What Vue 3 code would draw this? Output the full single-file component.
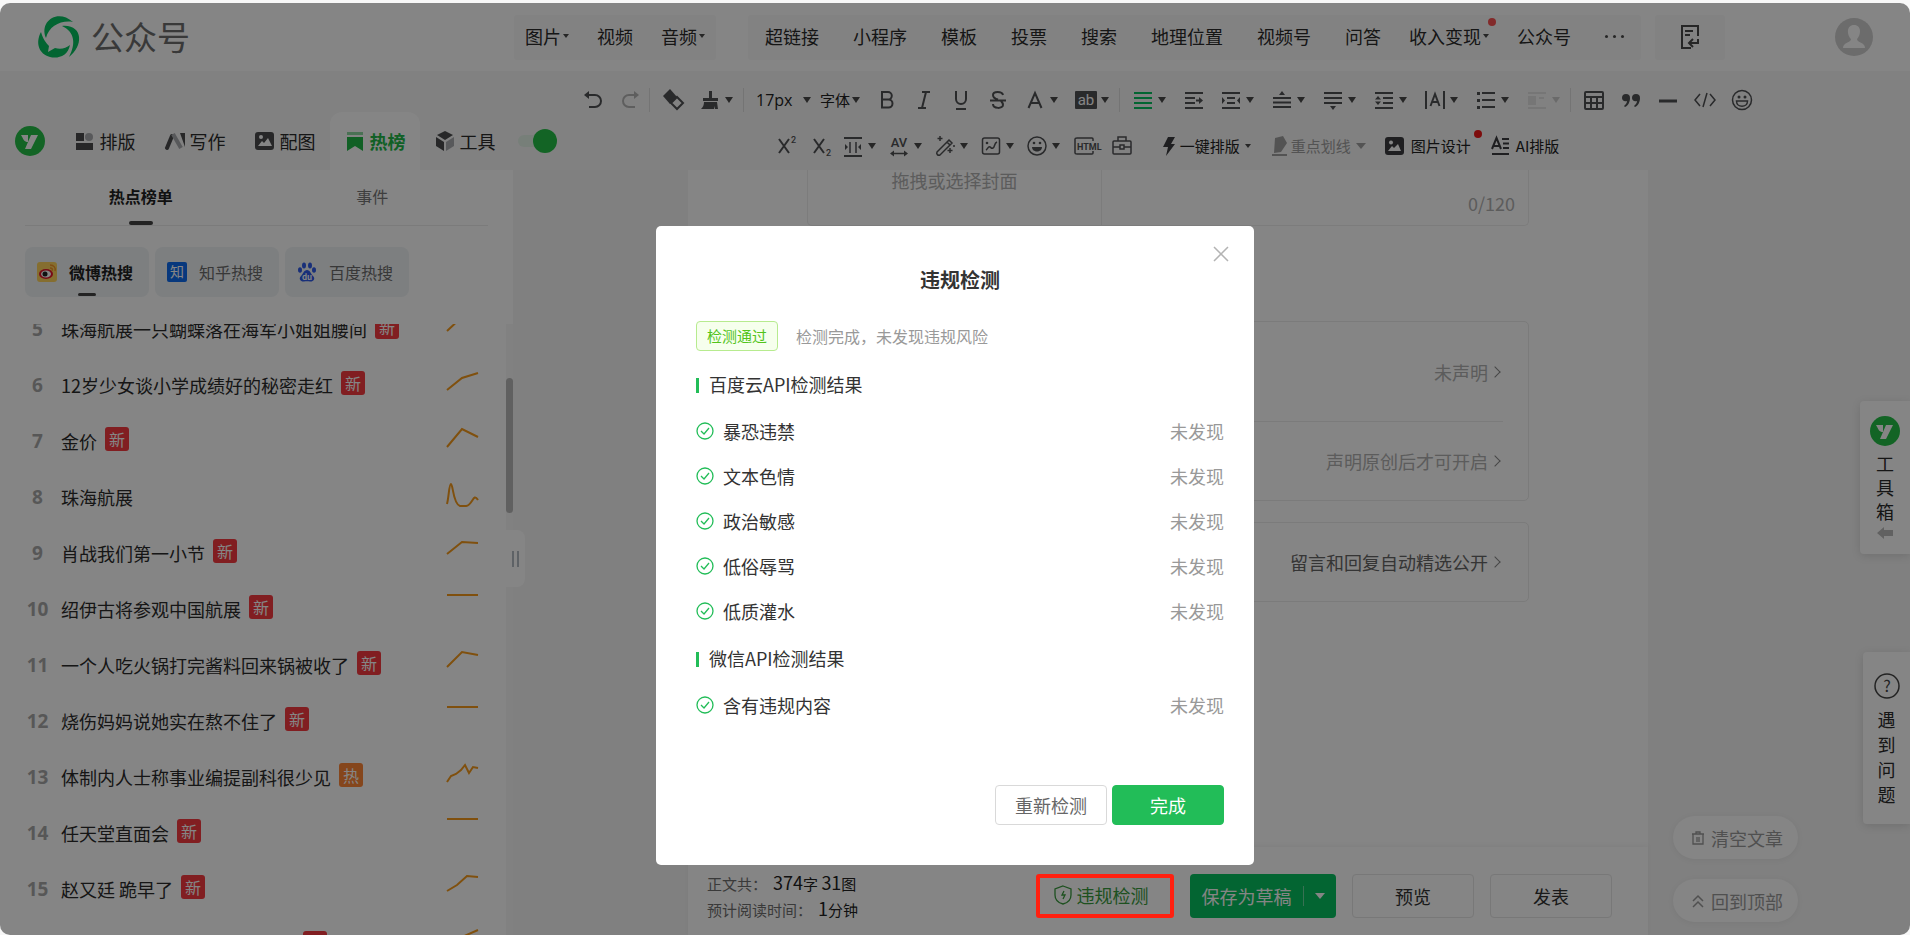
<script setup>
import { onMounted, ref } from 'vue'

const mediaMenu = [
  { label: '图片', caret: true },
  { label: '视频' },
  { label: '音频', caret: true }
]
const insertMenu = [
  { label: '超链接' },
  { label: '小程序' },
  { label: '模板' },
  { label: '投票' },
  { label: '搜索' },
  { label: '地理位置' },
  { label: '视频号' },
  { label: '问答' },
  { label: '收入变现', caret: true, dot: true },
  { label: '公众号' }
]

const line = 'fill="none" stroke="currentColor" stroke-width="2"'
const thin = 'fill="none" stroke="currentColor" stroke-width="1.5"'
const face = 'font-family="Roboto, sans-serif" fill="currentColor"'

const icons = {
  undo: `<path ${line} d="M3 5h9a5.5 5.5 0 0 1 0 12H6"/><path fill="currentColor" d="M1 5l5-4v8z"/>`,
  redo: `<path ${line} d="M17 5H9a5.5 5.5 0 0 0 0 12h6"/><path fill="currentColor" d="M19 5l-5-4v8z"/>`,
  eraser: `<path fill="currentColor" d="M0 6l7-7 7 8-7 7z"/><path ${line} d="M8 13l6-6 6 6-6 6z"/>`,
  brush: `<path fill="currentColor" d="M9 1h3v7h6v3H3V8h6zM4 12h13l1 7h-3l-1-3v3H1c2-2 3-4 3-7z"/>`,
  bold: `<path ${line} d="M5 2h6a3.8 3.8 0 0 1 0 7.600H5zM5 9.600h6.500a4 4 0 0 1 0 8H5z"/>`,
  italic: `<path ${line} d="M8 2h8M4 18h8M12 2L8 18"/>`,
  underline: `<path ${line} d="M5 1v8a5 5 0 0 0 10 0V1M5 19h10"/>`,
  strike: `<path ${line} d="M15 5c-1-4-10-4-10 0 0 3 3 4 5 4.500M2 10.500h16M5 14c0 5 10 5 10 1 0-2-1-3-2-4"/>`,
  color: `<path ${line} d="M3.500 18L10 3l6.500 15M6 13h8"/>`,
  ab: `<rect width="22" height="18" x="-1" y="1" rx="1" fill="currentColor"/><text x="10" y="15" text-anchor="middle" font-size="15" font-family="Roboto, sans-serif" fill="#fff">ab</text>`,
  justify: `<path fill="none" stroke="#07c160" stroke-width="2" d="M1 3h18M1 8h18M1 13h18M1 18h18"/>`,
  indent: `<path ${line} d="M1 3h18M1 8h10M1 13h10M1 18h18M12 10.500h4"/><path fill="currentColor" d="M15 7l4 3.500-4 3.500z"/>`,
  sides: `<path ${line} d="M1 3h18M6 8h8M6 13h8M1 18h18"/><path fill="currentColor" d="M1 7l3 3.500L1 14zM19 7l-3 3.500 3 3.500z"/>`,
  before: `<path ${line} d="M1 8h18M1 12.500h18M1 17h18"/><path fill="currentColor" d="M7 5l3-4 3 4z"/>`,
  after: `<path ${line} d="M1 3h18M1 8h18M1 13h18"/><path fill="currentColor" d="M7 16l3 4 3-4z"/>`,
  leading: `<path ${line} d="M1 3h18M9 8h10M9 13h10M1 18h18"/><path fill="currentColor" d="M1 9.500L4 6l3 3.500zM1 11.500L4 15l3-3.500z"/>`,
  spacing: `<path ${line} d="M1 1v18M19 1v18M5.500 16L10 4l4.500 12M7 12h6"/>`,
  list: `<path ${line} d="M6 3h13M6 10h13M6 17h13"/><path fill="currentColor" d="M1 2h3v3H1zM1 9h3v3H1zM1 16h3v3H1z"/>`,
  wrap: `<path ${line} d="M1 3h18M12 8h5M1 18h18"/><path fill="currentColor" d="M1 6h8v9H1z"/>`,
  table: `<rect x="1" y="2" width="18" height="17" rx="1" ${line}/><path ${line} d="M1 7h18M1 13h18M7 8v11M13 8v11"/>`,
  quote: `<path fill="currentColor" d="M5 4a4 4 0 0 1 4 4c0 4-2 8-5 9l-1-1c2-2 3-3 3-5-3 1-5-1-5-3a4 4 0 0 1 4-4zM15 4a4 4 0 0 1 4 4c0 4-2 8-5 9l-1-1c2-2 3-3 3-5-3 1-5-1-5-3a4 4 0 0 1 4-4z"/>`,
  rule: `<path fill="none" stroke="currentColor" stroke-width="3" d="M1 11h18"/>`,
  code: `<path ${thin} d="M5 4L0 10l5 6M15 4l5 6-5 6M12 3L8 17"/>`,
  smile: `<circle cx="10" cy="10" r="9.500" ${thin}/><circle cx="7" cy="7" r="1.500" fill="currentColor"/><circle cx="13" cy="7" r="1.500" fill="currentColor"/><path ${thin} d="M4.500 11h11c0 7-11 7-11 0z"/>`,
  sup: `<path ${line} d="M2 3l10 14M12 3L2 17"/><text x="14" y="7" font-size="9" font-weight="500" ${face}>2</text>`,
  sub: `<path ${line} d="M2 3l10 14M12 3L2 17"/><text x="14" y="20" font-size="9" font-weight="500" ${face}>2</text>`,
  margins: `<path ${line} d="M1 2h18M1 20h18"/><path ${thin} d="M7 6v11M13 6v11"/><path fill="currentColor" d="M2 8l3 3-3 3zM18 8l-3 3 3 3z"/>`,
  tracking: `<text x="10" y="11" text-anchor="middle" font-size="13" font-weight="500" ${face}>AV</text><path ${thin} d="M3 17.500h14"/><path fill="currentColor" d="M1 17.500l4-3v6zM19 17.500l-4-3v6z"/>`,
  wand: `<path ${thin} d="M2 16L14 4l3 3L5 19c-2 1-4-1-3-3zM12 6l3 3M5 0v5M2.500 2.500h5M15 12v5M12.500 14.500h5M18 10h2"/>`,
  picture: `<rect x="1.500" y="2" width="17" height="16" rx="2" ${thin}/><path ${thin} d="M5 14c2-1 2-4 4-3s1 2 3 1 1-5 4-6"/><circle cx="6" cy="7" r="1.300" fill="currentColor"/>`,
  grin: `<circle cx="10" cy="10" r="9" ${thin}/><circle cx="7" cy="7" r="1.300" fill="currentColor"/><circle cx="13" cy="7" r="1.300" fill="currentColor"/><path fill="currentColor" d="M5 11h10c0 6-10 6-10 0z"/>`,
  html: `<path ${thin} d="M16 5V3q0-1-1-1H0q-2 0-2 1v14q0 1 2 1h15q1 0 1-1v-2"/><text x="0" y="13.500" font-size="9" font-weight="700" ${face}>HTML</text>`,
  briefcase: `<rect x="1" y="5" width="18" height="13" rx="1" ${thin}/><path ${thin} d="M6 5V1h8v4M1 11h7M12 11h7M8 9h4v4H8z"/>`,
  bolt: `<path fill="currentColor" d="M9 1h7l-4 7h4L7 20l2-9H4z"/>`,
  marker: `<path fill="currentColor" d="M5 2l8-2 4 7-6 9-7 1zM2 18h15v2H2z"/>`,
  poster: `<rect x="0" y="1" width="19" height="18" rx="3" fill="currentColor"/><circle cx="6" cy="6.500" r="2" fill="#fff"/><path fill="#fff" d="M3 15l4-5 2 2 4-4 3 7z"/>`,
  ai: `<path ${line} d="M2 13L6.500 2 11 13M3.500 10h6M12 3h7M13 7.500h6M13 12h6M2 18h17"/>`
}

const rowOne = [
  { icon: 'undo', name: '撤销' },
  { icon: 'redo', name: '重做', off: true },
  { sep: true },
  { icon: 'eraser', name: '清除格式' },
  { icon: 'brush', name: '格式刷', caret: true },
  { sep: true },
  { select: '17px', name: '字号', kind: 'size' },
  { select: '字体', name: '字体', kind: 'family' },
  { icon: 'bold', name: '加粗' },
  { icon: 'italic', name: '斜体' },
  { icon: 'underline', name: '下划线' },
  { icon: 'strike', name: '删除线' },
  { icon: 'color', name: '字体颜色', caret: true },
  { icon: 'ab', name: '背景色', caret: true },
  { sep: true },
  { icon: 'justify', name: '对齐', caret: true },
  { icon: 'indent', name: '首行缩进' },
  { icon: 'sides', name: '两端缩进', caret: true },
  { icon: 'before', name: '段前距', caret: true },
  { icon: 'after', name: '段后距', caret: true },
  { icon: 'leading', name: '行间距', caret: true },
  { icon: 'spacing', name: '字间距', caret: true },
  { icon: 'list', name: '列表', caret: true },
  { icon: 'wrap', name: '图文环绕', caret: true, off: true, faint: true },
  { sep: true },
  { icon: 'table', name: '表格' },
  { icon: 'quote', name: '引用' },
  { icon: 'rule', name: '分隔线' },
  { icon: 'code', name: '代码' },
  { icon: 'smile', name: '表情' }
]
const rowTwo = [
  { icon: 'sup', name: '上标' },
  { icon: 'sub', name: '下标' },
  { icon: 'margins', name: '页边距', caret: true },
  { icon: 'tracking', name: '字距', caret: true },
  { icon: 'wand', name: '魔棒', caret: true },
  { icon: 'picture', name: '图片', caret: true },
  { icon: 'grin', name: '表情', caret: true },
  { icon: 'html', name: 'HTML' },
  { icon: 'briefcase', name: '素材' }
]

const panels = [
  {
    label: '排版',
    art: '<path fill="#4b4c4e" d="M1 2h8v8H1zM1 12h17v7H1z"/><circle cx="14" cy="6" r="4" fill="#a9abae"/>'
  },
  {
    label: '写作',
    art: '<path fill="none" stroke="#4b4c4e" stroke-width="4" stroke-linecap="round" d="M2 17L7 5"/><path fill="none" stroke="#a9abae" stroke-width="4" d="M8 3l8 14"/><path fill="#4b4c4e" d="M15 2h5v14z"/>'
  },
  {
    label: '配图',
    art: '<rect x="0" y="1" width="19" height="18" rx="3" fill="#4b4c4e"/><circle cx="6" cy="6" r="2" fill="#fff"/><path fill="#fff" d="M3 15l4-5 2 2 4-5 4 8z"/>'
  },
  {
    label: '热榜',
    active: true,
    art: '<path fill="#22b848" d="M2 6h16v14l-8-5-8 5z"/><path fill="#8fd9a2" d="M2 1h16v3H2z"/>'
  },
  {
    label: '工具',
    art: '<path fill="#4b4c4e" d="M10 0l8 4-8 5-8-5zM1 6l8 5v9l-8-5z"/><path fill="#a9abae" d="M19 6l-8 5v9l8-5z"/>'
  }
]

const topics = [
  { rank: 5, title: '珠海航展一只蝴蝶落在海军小姐姐腰间', tag: '新', trend: 'M1 22L16 8l16-3' },
  { rank: 6, title: '12岁少女谈小学成绩好的秘密走红', tag: '新', trend: 'M1 25L16 13l16-5' },
  { rank: 7, title: '金价', tag: '新', trend: 'M1 26L16 8l16 8' },
  { rank: 8, title: '珠海航展', trend: 'M1 27C3 19 3 7 5 7c2 0 2 20 9 22h6c7-1 7-14 12-6' },
  { rank: 9, title: '肖战我们第一小节', tag: '新', trend: 'M1 21L16 9l16 1' },
  { rank: 10, title: '绍伊古将参观中国航展', tag: '新', trend: 'M1 6h31' },
  { rank: 11, title: '一个人吃火锅打完酱料回来锅被收了', tag: '新', trend: 'M1 22L16 7l16 3' },
  { rank: 12, title: '烧伤妈妈说她实在熬不住了', tag: '新', trend: 'M1 6h31' },
  { rank: 13, title: '体制内人士称事业编提副科很少见', tag: '热', trend: 'M1 25l4-6 5-2 5-4 4-5 4 8 4-6 5 1' },
  { rank: 14, title: '任天堂直面会', tag: '新', trend: 'M1 6h31' },
  { rank: 15, title: '赵又廷 跪早了', tag: '新', trend: 'M1 22l10-6L21 7l11 1' },
  { rank: 16, title: '', tag: '新', trend: 'M1 22L16 12l16-7' }
]

const results = [
  { name: '百度云API检测结果', items: ['暴恐违禁', '文本色情', '政治敏感', '低俗辱骂', '低质灌水'] },
  { name: '微信API检测结果', items: ['含有违规内容'] }
]

const list = ref(null)
onMounted(() => {
  list.value.scrollTop = 23
})
</script>

<template>
  <div class="desk">
    <div class="window">
      <header class="top">
        <a class="brand" href="#">
          <svg width="44" height="44" viewBox="0 0 44 44" aria-hidden="true">
            <g fill="#07c160">
              <path d="M9 24C2 8 20-6 36 8 24 6 12 12 9 24z" />
              <path d="M25 12c21-2 22 20 7 31C39 30 38 18 25 12z" />
              <path d="M4 18c2 7 5 11 8 14l-1 6 7-4c6 2 11 0 15-3-2 11-12 14-20 12C2 40-2 29 4 18z" />
            </g>
          </svg>
          <span>公众号</span>
        </a>
        <nav class="menus">
          <div class="menu">
            <button v-for="m in mediaMenu" :key="m.label" :class="{ more: m.caret }">
              {{ m.label }}<i v-if="m.caret" class="caret small"></i>
            </button>
          </div>
          <div class="menu second">
            <button v-for="m in insertMenu" :key="m.label" :class="{ more: m.caret }">
              {{ m.label }}<i v-if="m.caret" class="caret small"></i><i v-if="m.dot" class="dot"></i>
            </button>
            <button class="dots" aria-label="更多"><i></i><i></i><i></i></button>
          </div>
          <div class="menu exit">
            <button aria-label="导入">
              <svg width="22" height="24" viewBox="0 0 22 24" fill="none" stroke="#4a4a4a" stroke-width="2">
                <path d="M19 11V1H3v22h9M6 6h8M6 10h5M19 14v4h-9M14 14l-4 4 4 4" />
              </svg>
            </button>
          </div>
        </nav>
        <button class="avatar" aria-label="账号">
          <svg width="38" height="38" viewBox="0 0 38 38">
            <circle cx="19" cy="19" r="19" fill="#cfcfcf" />
            <path fill="#fff" d="M19 7c8 0 7 10 3 14 0 4 8 3 8 9H8c0-6 8-5 8-9-4-4-5-14 3-14z" />
          </svg>
        </button>
      </header>

      <div class="bar">
        <div class="panels">
          <svg class="mark" width="30" height="30" viewBox="0 0 30 30">
            <circle cx="15" cy="15" r="15" fill="#25c048" />
            <path fill="#fff" d="M6 9h7v7c-4 0-4-2-7-7zM16 9h7l-7 14h-6z" />
          </svg>
          <button v-for="p in panels" :key="p.label" :class="['panel', { active: p.active }]">
            <svg width="20" height="20" viewBox="0 0 20 20" v-html="p.art"></svg>{{ p.label }}
          </button>
          <input class="toggle" type="checkbox" checked aria-label="启用助手" />
        </div>
        <div class="tools">
          <div class="tool-row">
            <template v-for="(t, i) in rowOne" :key="i">
              <i v-if="t.sep" class="sep"></i>
              <label v-else-if="t.select" :class="['pick', t.kind]">
                <select :aria-label="t.name"><option>{{ t.select }}</option></select>
                <i class="caret"></i>
              </label>
              <button v-else :class="['tool', { wide: t.caret, off: t.off, faint: t.faint }]" :aria-label="t.name">
                <svg width="20" height="20" viewBox="0 0 20 20" v-html="icons[t.icon]"></svg>
                <i v-if="t.caret" class="caret"></i>
              </button>
            </template>
          </div>
          <div class="tool-row dense">
            <button v-for="t in rowTwo" :key="t.icon" :class="['tool', { wide: t.caret }]" :aria-label="t.name">
              <svg width="20" height="20" viewBox="0 0 20 20" v-html="icons[t.icon]"></svg>
              <i v-if="t.caret" class="caret"></i>
            </button>
            <div class="labelled">
              <button><svg width="20" height="20" viewBox="0 0 20 20" v-html="icons.bolt"></svg>一键排版<i class="caret small"></i></button>
              <button class="muted"><svg width="20" height="20" viewBox="0 0 20 20" v-html="icons.marker"></svg>重点划线<i class="caret big"></i></button>
              <button class="roomy"><svg width="20" height="20" viewBox="0 0 20 20" v-html="icons.poster"></svg>图片设计<i class="dot"></i></button>
              <button class="roomy"><svg width="20" height="20" viewBox="0 0 20 20" v-html="icons.ai"></svg>AI排版</button>
            </div>
          </div>
        </div>
      </div>

      <div class="body">
        <aside class="side">
          <div class="tabs">
            <button class="active">热点榜单</button>
            <button>事件</button>
          </div>
          <div class="sources">
            <button class="active">
              <svg width="20" height="20" viewBox="0 0 20 20">
                <rect width="20" height="20" rx="3" fill="#ffd45c" />
                <ellipse cx="9" cy="12" rx="7" ry="5" fill="#e6162d" />
                <ellipse cx="9" cy="12" rx="5" ry="3.500" fill="#fff" />
                <circle cx="8" cy="12" r="2.500" fill="#222" />
                <path fill="none" stroke="#f5952a" stroke-width="1.500" d="M13 6c2 0 3 1 2 3M13 3c4 0 6 3 5 6" />
              </svg>
              微博热搜
            </button>
            <button>
              <svg width="20" height="20" viewBox="0 0 20 20">
                <rect width="20" height="20" rx="2" fill="#0f6cf0" />
                <text x="10" y="15" text-anchor="middle" font-size="14" fill="#fff">知</text>
              </svg>
              知乎热搜
            </button>
            <button>
              <svg width="20" height="20" viewBox="0 0 20 20">
                <g fill="#2f5be8">
                  <ellipse cx="7" cy="3.500" rx="2" ry="3" />
                  <ellipse cx="13" cy="3.500" rx="2" ry="3" />
                  <ellipse cx="3" cy="8" rx="2" ry="2.800" />
                  <ellipse cx="17" cy="8" rx="2" ry="2.800" />
                  <path d="M10 8c3 0 4 4 6 6 3 3 0 6-3 5.500-2-.500-4-.500-6 0-3 .500-6-2.500-3-5.500 2-2 3-6 6-6z" />
                </g>
                <text x="10" y="17.500" text-anchor="middle" font-size="8" font-weight="700" fill="#fff">du</text>
              </svg>
              百度热搜
            </button>
          </div>
          <div class="feed">
            <ol ref="list" class="topics">
              <li v-for="t in topics" :key="t.rank">
                <b>{{ t.rank }}</b>
                <a href="#" :class="{ blank: !t.title }">{{ t.title }}</a>
                <span v-if="t.tag" :class="['tag', { hot: t.tag === '热' }]">{{ t.tag }}</span>
                <svg width="33" height="40" viewBox="0 0 33 40">
                  <path :d="t.trend" fill="none" stroke="#f59a1b" stroke-width="2" />
                </svg>
              </li>
            </ol>
            <div class="track"><i></i></div>
          </div>
          <button class="grip" aria-label="收起侧栏"><i></i><i></i></button>
        </aside>

        <main class="stage">
          <section class="paper">
            <div class="cover">
              <div class="pickcover">拖拽或选择封面</div>
              <div class="count">0/120</div>
            </div>
            <div class="card options">
              <a href="#" class="first">未声明<i class="chev"></i></a>
              <a href="#">声明原创后才可开启<i class="chev"></i></a>
            </div>
            <div class="card">
              <a href="#" class="dark">留言和回复自动精选公开<i class="chev"></i></a>
            </div>
            <footer class="foot">
              <div class="stats">
                <p>正文共：<span><b>374</b>字 <b>31</b>图</span></p>
                <p>预计阅读时间：<span><b>1</b>分钟</span></p>
              </div>
              <button class="check">
                <svg width="18" height="20" viewBox="0 0 18 20" fill="none" stroke="currentColor">
                  <path stroke-width="1.300" d="M9 1l8 3v6c0 5-4 8-8 9-4-1-8-4-8-9V4z" />
                  <path stroke-width="1.300" d="M10 6l-2 4h3l-2 4" />
                </svg>
                违规检测
                <i class="frame"></i>
              </button>
              <div class="save">
                <button>保存为草稿</button>
                <button class="drop" aria-label="更多保存方式"><i class="caret big"></i></button>
              </div>
              <button class="plain">预览</button>
              <button class="plain">发表</button>
            </footer>
          </section>
        </main>
      </div>

      <button class="dock toolbox">
        <svg width="30" height="30" viewBox="0 0 30 30">
          <circle cx="15" cy="15" r="15" fill="#25c048" />
          <path fill="#fff" d="M6 9h7v7c-4 0-4-2-7-7zM16 9h7l-7 14h-6z" />
        </svg>
        <span>工</span><span>具</span><span>箱</span>
        <svg width="16" height="12" viewBox="0 0 16 12"><path fill="#bbb" d="M0 6l7-6v3h9v6H7v3z" /></svg>
      </button>
      <button class="dock help">
        <svg width="26" height="26" viewBox="0 0 26 26">
          <circle cx="13" cy="13" r="12" fill="none" stroke="#444" stroke-width="1.500" />
          <text x="13" y="19" text-anchor="middle" font-size="16" fill="#444">?</text>
        </svg>
        <span>遇</span><span>到</span><span>问</span><span>题</span>
      </button>
      <div class="pills">
        <button>
          <svg width="12" height="14" viewBox="0 0 12 14" fill="none" stroke="currentColor" stroke-width="1.300">
            <path d="M0 3h12M4 3V1h4v2M1 3v10h10V3M5 6v5M7 6v5" />
          </svg>
          清空文章
        </button>
        <button>
          <svg width="12" height="14" viewBox="0 0 12 14" fill="none" stroke="currentColor" stroke-width="1.500">
            <path d="M1 7l5-5 5 5M1 13l5-5 5 5" />
          </svg>
          回到顶部
        </button>
      </div>

      <div class="mask">
        <div class="dialog" role="dialog" aria-labelledby="dialog-title">
          <button class="close" aria-label="关闭">
            <svg width="16" height="16" viewBox="0 0 16 16" stroke="#b3b3b3" stroke-width="1.500"><path d="M1 1l14 14M15 1L1 15" /></svg>
          </button>
          <h2 id="dialog-title">违规检测</h2>
          <p class="summary"><span>检测通过</span>检测完成，未发现违规风险</p>
          <section v-for="r in results" :key="r.name">
            <h3>{{ r.name }}</h3>
            <ul>
              <li v-for="item in r.items" :key="item">
                <svg width="18" height="18" viewBox="0 0 18 18" fill="none" stroke="#22bd58" stroke-width="1.300">
                  <circle cx="9" cy="9" r="8" />
                  <path d="M5 9l3 3 5-6" />
                </svg>
                {{ item }}<em>未发现</em>
              </li>
            </ul>
          </section>
          <div class="actions">
            <button>重新检测</button>
            <button class="primary">完成</button>
          </div>
        </div>
      </div>
    </div>
  </div>
</template>

<style>
body {
  background: #f7f7f7;
}
</style>

<style scoped>
* {
  box-sizing: border-box;
}
.desk {
  height: 100vh;
  padding-top: 3px;
  font-family: "Noto Sans CJK SC", "Noto Sans", sans-serif;
  font-size: 18px;
  line-height: 24px;
  color: #2b2b2b;
}
button {
  padding: 0;
  border: 0;
  background: none;
  font: inherit;
  color: inherit;
}
a {
  color: inherit;
  text-decoration: none;
}
p,
h2,
h3,
ul,
ol {
  margin: 0;
  padding: 0;
  list-style: none;
}
svg {
  flex: none;
  overflow: visible;
}
.window {
  position: relative;
  display: flex;
  flex-direction: column;
  height: 100%;
  overflow: hidden;
  border-radius: 10px;
  background: #f5f5f5;
}
.caret {
  flex: none;
  width: 0;
  border: 4px solid transparent;
  border-top: 6px solid #4a4a4a;
  border-bottom: 0;
}
.caret.small {
  border-width: 3px;
  border-top-width: 4px;
  border-bottom: 0;
}
.caret.big {
  border-width: 5px;
  border-top-width: 6px;
  border-bottom: 0;
}
.dot {
  position: absolute;
  width: 8px;
  height: 8px;
  border-radius: 50%;
  background: #fa5151;
}

.top {
  display: flex;
  align-items: center;
  height: 68px;
  flex: none;
  padding-right: 37px;
  background: #fff;
}
.brand {
  display: flex;
  align-items: center;
  gap: 10px;
  width: 514px;
  flex: none;
  padding: 0 0 2px 37px;
  font-size: 33px;
  line-height: 44px;
  color: #6e6e6e;
}
.menus {
  display: flex;
}
.menu {
  display: flex;
  height: 45px;
  border-radius: 3px;
  background: #fafafa;
}
.menu.second {
  margin-left: 32px;
}
.menu.exit {
  margin-left: 14px;
}
.menu button {
  position: relative;
  display: flex;
  align-items: center;
  padding: 0 17px 2px;
  white-space: nowrap;
}
.menu button.more {
  padding: 0 11px 2px;
}
.menu .caret {
  margin-left: 2px;
}
.menu .dot {
  top: 3px;
  right: 4px;
}
.menu .dots {
  gap: 5px;
}
.dots i {
  width: 3px;
  height: 3px;
  border-radius: 50%;
  background: #4a4a4a;
}
.menu.exit button {
  padding: 0 24px;
}
.avatar {
  display: flex;
  margin-left: auto;
}

.bar {
  display: flex;
  flex: none;
  height: 99px;
  background: #f7f7f7;
}
.panels {
  display: flex;
  align-items: flex-end;
  width: 513px;
  flex: none;
}
.mark {
  margin: 0 15px 14px;
}
.panel {
  display: flex;
  align-items: center;
  justify-content: center;
  gap: 5px;
  width: 90px;
  flex: none;
  height: 58px;
}
.panel.active {
  border-radius: 12px 12px 0 0;
  background: #fff;
  font-weight: 700;
  color: #22b848;
}
.toggle {
  position: relative;
  flex: none;
  appearance: none;
  width: 39px;
  height: 12px;
  margin: 0 0 23px 8px;
  border-radius: 6px;
  background: #e4f3e8;
}
.toggle::after {
  content: "";
  position: absolute;
  top: -6px;
  right: 0;
  width: 24px;
  height: 24px;
  border-radius: 50%;
  background: #25c048;
}
.tools {
  flex: 1;
  display: flex;
  flex-direction: column;
  align-items: center;
  padding: 6px 87px 0 0;
  color: #505154;
}
.tool-row {
  display: flex;
  align-items: center;
  height: 46px;
}
.tool-row.dense {
  padding-right: 8px;
}
.tool {
  display: flex;
  align-items: center;
  gap: 5px;
  width: 37px;
  padding-left: 8px;
}
.tool.wide {
  width: 51px;
}
.dense .tool {
  width: 35px;
}
.dense .tool.wide {
  width: 46px;
  padding-left: 4px;
}
.tool.off {
  color: #b5b5b5;
}
.tool.faint {
  color: #e2e2e2;
}
.tool.faint .caret {
  border-top-color: #ccc;
}
.sep {
  width: 1px;
  height: 24px;
  margin: 0 5px 0 0;
  background: #dedede;
}
.pick {
  display: flex;
  align-items: center;
  justify-content: space-between;
  width: 65px;
  padding: 0 3px 0 7px;
}
.pick.family {
  width: 55px;
  padding: 0 9px 0 6px;
}
.pick select {
  appearance: none;
  padding: 0;
  border: 0;
  background: none;
  font-family: inherit;
  font-size: 15px;
  line-height: 24px;
  color: #222;
}
.pick.size select {
  font-family: "Open Sans", sans-serif;
  font-size: 16px;
}
.labelled {
  display: flex;
  gap: 19px;
  padding-left: 20px;
}
.labelled button {
  position: relative;
  display: flex;
  align-items: center;
  font-size: 15px;
  color: #222;
}
.labelled svg {
  margin-right: 1px;
  color: #3c3d40;
}
.labelled .roomy svg {
  margin-right: 6px;
}
.labelled .caret {
  margin-left: 5px;
}
.labelled .muted,
.labelled .muted svg {
  color: #a0a0a0;
}
.muted .caret {
  border-top-color: #a0a0a0;
}
.labelled .dot {
  top: -4px;
  right: -11px;
  background: #f01818;
}

.body {
  flex: 1;
  display: flex;
  min-height: 0;
}
.side {
  position: relative;
  display: flex;
  flex-direction: column;
  width: 513px;
  flex: none;
  background: #fff;
}
.tabs {
  display: flex;
  margin: 0 25px;
  border-bottom: 1px solid #ececec;
}
.tabs button {
  position: relative;
  flex: 1;
  height: 55px;
  padding-bottom: 3px;
  font-size: 16px;
  color: #777;
}
.tabs .active,
.sources .active {
  font-weight: 700;
  color: #222;
}
.tabs .active::after,
.sources .active::after {
  content: "";
  position: absolute;
  bottom: 0;
  left: 50%;
  width: 24px;
  height: 4px;
  margin-left: -12px;
  border-radius: 2px;
  background: #444;
}
.sources {
  display: flex;
  gap: 6px;
  padding: 21px 25px 27px;
}
.sources button {
  position: relative;
  display: flex;
  align-items: center;
  gap: 12px;
  width: 124px;
  height: 50px;
  padding-left: 12px;
  border-radius: 8px;
  background: #eff3f6;
  font-size: 16px;
  color: #6b6b6b;
  white-space: nowrap;
}
.sources .active::after {
  width: 18px;
  height: 3px;
  margin-left: -9px;
  bottom: 1px;
}
.feed {
  flex: 1;
  display: flex;
  min-height: 0;
}
.topics {
  flex: 1;
  overflow: hidden;
}
.topics li {
  display: flex;
  align-items: center;
  height: 56px;
  padding: 0 27px 0 20px;
}
.topics b {
  width: 35px;
  margin-right: 6px;
  text-align: center;
  font-family: "Open Sans", sans-serif;
  font-size: 19px;
  color: #a8a8a8;
}
.topics .blank {
  width: 234px;
}
.tag {
  width: 24px;
  height: 24px;
  margin: 0 0 4px 8px;
  border-radius: 3px;
  background: #f73b40;
  text-align: center;
  font-size: 16px;
  color: #fff;
}
.tag.hot {
  background: #ff8636;
}
.topics svg {
  margin-left: auto;
}
.track {
  width: 7px;
  padding-top: 54px;
  background: #f8f8f8;
}
.track i {
  display: block;
  height: 135px;
  border-radius: 4px;
  background: #b8b8b8;
}
.grip {
  position: absolute;
  top: 360px;
  left: 506px;
  display: flex;
  align-items: center;
  justify-content: center;
  gap: 3px;
  width: 19px;
  height: 57px;
  border-radius: 0 8px 8px 0;
  background: #fff;
}
.grip i {
  width: 2px;
  height: 16px;
  background: #b4bcc4;
}

.stage {
  flex: 1;
  display: flex;
  justify-content: center;
  padding-right: 87px;
}
.paper {
  display: flex;
  flex-direction: column;
  width: 960px;
  background: #fff;
  color: #b0b0b0;
}
.cover {
  display: flex;
  height: 56px;
  margin: 0 119px 95px;
  border: 1px solid #ededed;
  border-top: 0;
  border-radius: 0 0 5px 5px;
}
.pickcover {
  width: 294px;
  border-right: 1px solid #ededed;
  text-align: center;
  line-height: 20px;
}
.count {
  margin: auto 13px 10px auto;
}
.card {
  margin: 0 119px 21px;
  padding: 0 25px;
  border: 1px solid #ebebeb;
  border-radius: 5px;
}
.card a {
  display: flex;
  align-items: center;
  justify-content: flex-end;
  gap: 3px;
  height: 78px;
}
.card .first {
  height: 100px;
  border-bottom: 1px solid #ebebeb;
}
.card .dark {
  color: #666;
}
.chev {
  width: 8px;
  height: 8px;
  margin-right: 4px;
  border: solid #888;
  border-width: 1px 1px 0 0;
  transform: rotate(45deg);
}
.foot {
  display: flex;
  align-items: center;
  gap: 16px;
  height: 88px;
  margin-top: auto;
  padding: 9px 36px 0 19px;
  box-shadow: 0 -2px 5px rgba(0, 0, 0, 0.04);
}
.stats {
  margin-right: auto;
  font-size: 15px;
  color: #707070;
}
.stats span {
  margin-left: 6px;
  color: #222;
}
.stats b {
  font-size: 18px;
  font-weight: 400;
}
.check {
  position: relative;
  display: flex;
  align-items: center;
  justify-content: center;
  gap: 5px;
  width: 138px;
  height: 44px;
  padding: 0 8px 2px 0;
  color: #399b3d;
}
.frame {
  position: absolute;
  z-index: 20;
  inset: 0;
  border: 4px solid #ff2010;
  border-radius: 3px;
}
.save {
  display: flex;
  align-items: center;
  width: 146px;
  height: 44px;
  border-radius: 4px;
  background: #07c160;
  color: #fff;
}
.save button {
  flex: 1;
}
.save .drop {
  display: flex;
  justify-content: center;
  flex: none;
  width: 33px;
  padding: 7px 0;
  border-left: 1px solid #6bd99f;
}
.save .caret {
  border-top-color: #fff;
}
.plain {
  width: 122px;
  height: 44px;
  border: 1px solid #e6e6e6;
  border-radius: 4px;
  color: #333;
}

.dock {
  position: absolute;
  right: 0;
  display: flex;
  flex-direction: column;
  align-items: center;
  border-radius: 4px 0 0 4px;
  background: #fff;
  box-shadow: 0 2px 10px rgba(0, 0, 0, 0.12);
}
.toolbox {
  top: 398px;
  width: 50px;
  padding: 15px 0;
}
.toolbox svg:first-child {
  margin-bottom: 5px;
}
.toolbox svg:last-child {
  margin-top: 4px;
}
.help {
  top: 649px;
  width: 47px;
  padding: 21px 0 18px;
}
.help svg {
  margin-bottom: 7px;
}
.help span {
  margin-top: 1px;
}
.pills {
  position: absolute;
  right: 112px;
  bottom: 13px;
  display: grid;
  gap: 20px;
}
.pills button {
  display: flex;
  align-items: center;
  justify-content: center;
  gap: 7px;
  width: 125px;
  height: 43px;
  padding-left: 4px;
  border-radius: 22px;
  background: #fff;
  box-shadow: 0 1px 6px rgba(0, 0, 0, 0.06);
  color: #9a9a9a;
}

.mask {
  position: absolute;
  inset: 0;
  z-index: 10;
  display: flex;
  justify-content: center;
  align-items: flex-start;
  padding-top: 223px;
  background: rgba(0, 0, 0, 0.48);
}
.dialog {
  position: relative;
  width: 598px;
  padding: 40px 30px 40px 40px;
  border-radius: 5px;
  background: #fff;
  color: #333;
}
.close {
  position: absolute;
  top: 20px;
  right: 25px;
  display: flex;
}
.dialog h2 {
  text-align: center;
  font-size: 20px;
  line-height: 28px;
}
.summary {
  display: flex;
  align-items: center;
  margin-top: 27px;
  font-size: 16px;
  color: #999;
}
.summary span {
  width: 82px;
  height: 30px;
  margin-right: 18px;
  border: 1px solid #b7eb8f;
  border-radius: 4px;
  background: #f6ffed;
  text-align: center;
  font-size: 15px;
  line-height: 27px;
  color: #52c41a;
}
.dialog h3 {
  display: flex;
  align-items: center;
  gap: 10px;
  height: 48px;
  font-size: 18px;
  font-weight: 400;
}
.dialog h3::before {
  content: "";
  width: 3px;
  height: 15px;
  margin-top: 3px;
  background: #22bd58;
}
.dialog section {
  padding-top: 9px;
}
.dialog section + section {
  padding-top: 1px;
}
.dialog li {
  display: flex;
  align-items: center;
  gap: 9px;
  height: 45px;
}
.dialog em {
  margin-left: auto;
  font-style: normal;
  color: #999;
}
.actions {
  display: flex;
  justify-content: flex-end;
  gap: 5px;
  margin-top: 58px;
}
.actions button {
  width: 112px;
  height: 40px;
  border: 1px solid #d9d9d9;
  border-radius: 4px;
  color: #666;
}
.actions .primary {
  border-color: #22bd58;
  background: #22bd58;
  color: #fff;
}
</style>
